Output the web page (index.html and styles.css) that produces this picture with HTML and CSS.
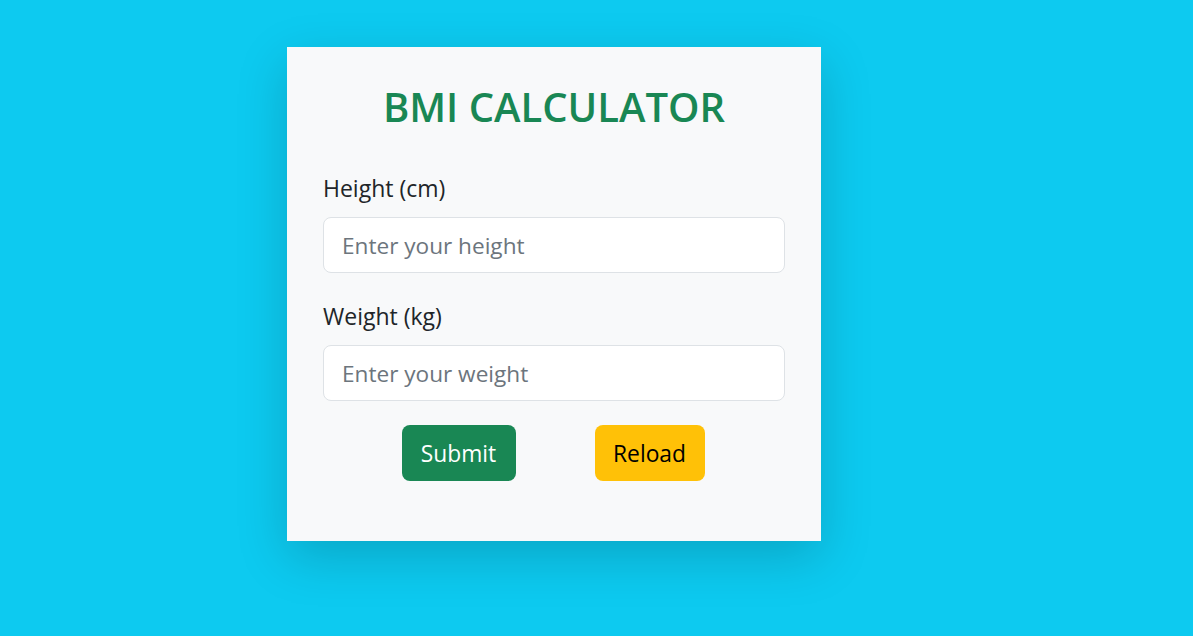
FILE: index.html
```html
<!DOCTYPE html>
<html lang="en">
<head>
<meta charset="utf-8">
<title>BMI Calculator</title>
<link rel="stylesheet" href="styles.css">
</head>
<body>
<main class="page">
  <section class="card">
    <h1 class="title">BMI CALCULATOR</h1>
    <form class="form">
      <div class="field">
        <label class="label" for="height">Height (cm)</label>
        <input class="input" id="height" type="text" placeholder="Enter your height">
      </div>
      <div class="field">
        <label class="label" for="weight">Weight (kg)</label>
        <input class="input" id="weight" type="text" placeholder="Enter your weight">
      </div>
      <div class="actions">
        <button type="button" class="btn btn-submit">Submit</button>
        <button type="button" class="btn btn-reload">Reload</button>
      </div>
    </form>
  </section>
</main>
</body>
</html>
```

FILE: styles.css
```css
* { box-sizing: border-box; }
html, body { margin: 0; padding: 0; }
body {
  background: #0dcaf0;
  height: 636px;
  overflow: hidden;
  font-family: "Open Sans", "Noto Sans", sans-serif;
  color: #212529;
}
.page {
  padding: 47px 0 0 287px;
}
.card {
  width: 534px;
  height: 494px;
  background: #f8f9fa;
  padding: 36px 36px 0;
  box-shadow: 0 16px 48px rgba(0, 0, 0, 0.175);
}
.title {
  margin: 0 0 42px;
  text-align: center;
  color: #198754;
  font-size: 40px;
  font-weight: 600;
  line-height: 48px;
  letter-spacing: 0;
}
.form {
  display: flex;
  flex-direction: column;
}
.field {
  display: flex;
  flex-direction: column;
}
.field + .field { margin-top: 28px; }
.label {
  font-size: 23px;
  line-height: 30px;
  margin-bottom: 14px;
}
.input {
  height: 56px;
  border: 1px solid #dee2e6;
  border-radius: 8px;
  background: #fff;
  padding: 1px 18px 0;
  font-family: inherit;
  font-size: 22.6px;
  color: #212529;
  outline: none;
}
.input::placeholder { color: #6c757d; opacity: 1; }
.actions {
  display: flex;
  justify-content: center;
  gap: 79px;
  margin-top: 24px;
  padding-right: 2px;
}
.btn {
  height: 56px;
  border: none;
  border-radius: 8px;
  font-family: inherit;
  font-size: 22.8px;
  padding: 0;
}
.btn-submit { background: #198754; color: #fff; width: 114px; }
.btn-reload { background: #ffc107; color: #000; width: 110px; }
```
